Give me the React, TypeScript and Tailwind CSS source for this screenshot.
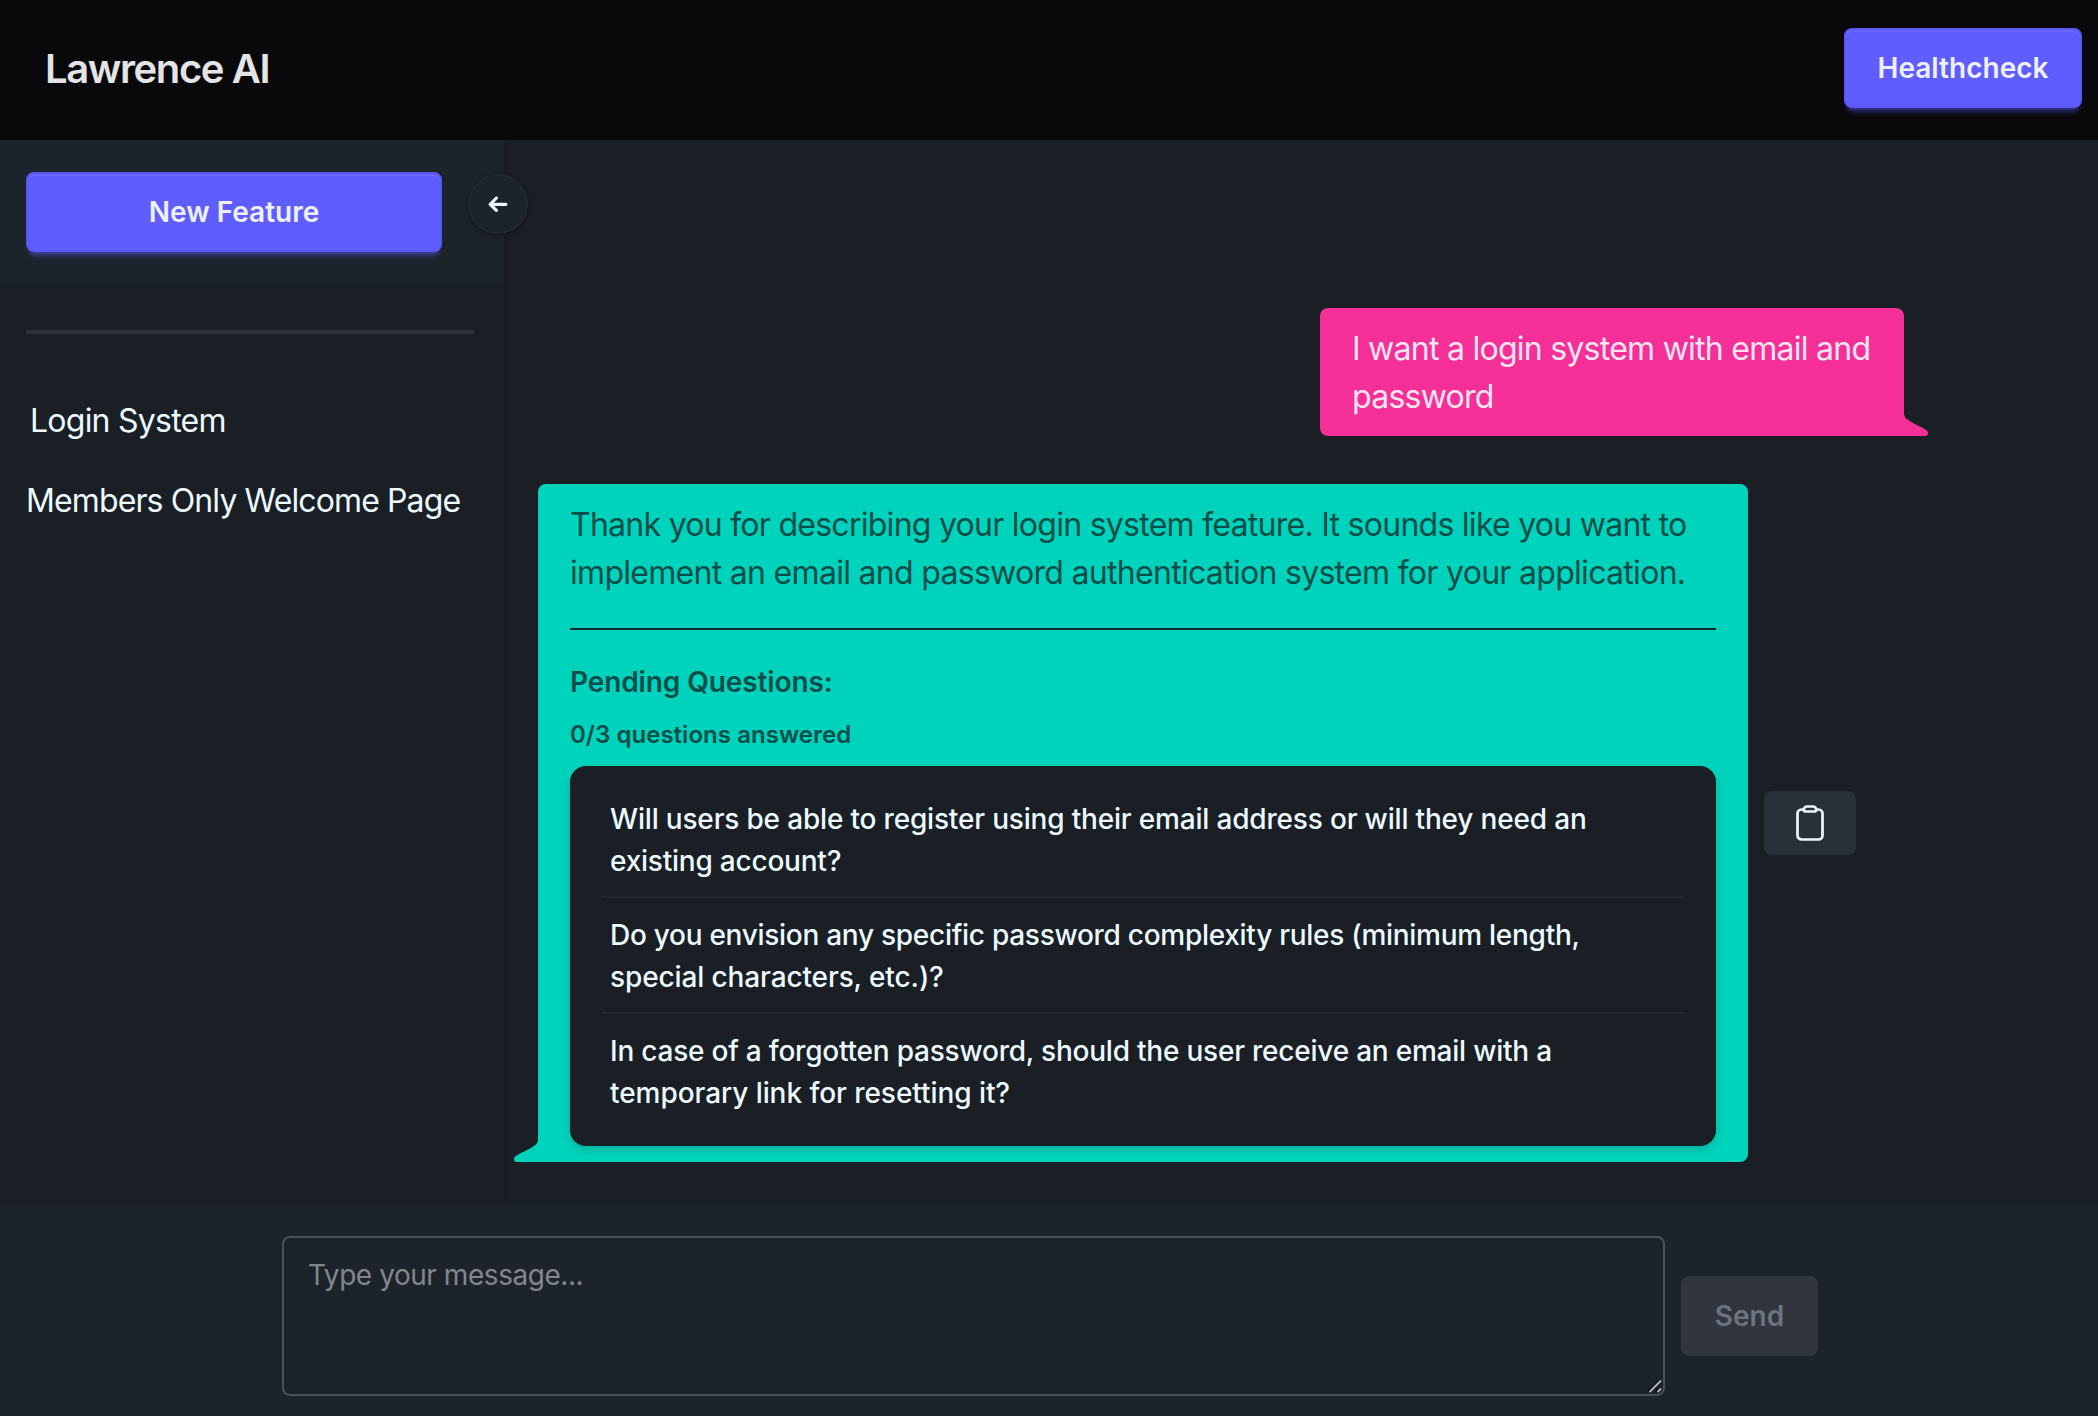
import React from "react";

const primaryButton =
  "flex h-20 items-center justify-center rounded-lg border-2 border-[#5b58f2] bg-[#605dff] text-[28px] font-semibold text-[#edf1fe] shadow-[inset_0_2px_0_rgba(255,255,255,0.06),0_6px_4px_-4px_rgba(96,93,255,0.4),0_8px_6px_-4px_rgba(96,93,255,0.3)]";

const questions = [
  {
    lines: [
      "Will users be able to register using their email address or will they need an",
      "existing account?",
    ],
    tracking: ["tracking-[-0.18px]", "tracking-[-0.22px]"],
  },
  {
    lines: [
      "Do you envision any specific password complexity rules (minimum length,",
      "special characters, etc.)?",
    ],
    tracking: ["tracking-[-0.28px]", "tracking-[-0.12px]"],
  },
  {
    lines: [
      "In case of a forgotten password, should the user receive an email with a",
      "temporary link for resetting it?",
    ],
    tracking: ["tracking-[-0.22px]", "tracking-[-0.06px]"],
  },
];

function BubbleTail({ className }: { className: string }) {
  return (
    <svg viewBox="0 0 24 24" className={`absolute bottom-0 size-6 ${className}`} fill="currentColor">
      <path d="M24 2.5C23.4 4.6 22.6 6 20.5 7.6C15.5 11.2 8 14.4 2.6 17.6C0.8 18.7 0 19.8 0 21.2C0 23 1 24 2.8 24H24Z" />
    </svg>
  );
}

function Header() {
  return (
    <header className="flex h-[140px] shrink-0 items-center justify-between bg-[#09090b] pr-4 pb-1 pl-[45px]">
      <h1 className="pt-0.5 text-[40px] leading-none font-semibold tracking-[-1.4px] text-[#e4e4e7]">Lawrence AI</h1>
      <button className={`${primaryButton} w-[238px]`}>Healthcheck</button>
    </header>
  );
}

function Sidebar() {
  return (
    <aside className="relative w-[504px] shrink-0 shadow-[2px_0_5px_rgba(0,0,0,0.12)]">
      <div className="h-36 bg-[#1d232a] pt-8 pl-[26px]">
        <button className={`${primaryButton} w-[416px]`}>New Feature</button>
      </div>
      <div className="mt-[46px] ml-[26px] h-1 w-[448px] bg-[#2e3138]" />
      <nav className="mt-[47px] text-[32px] text-[#ecf9ff]">
        <a className="flex h-20 items-center pl-[30px] tracking-[-0.76px]">Login System</a>
        <a className="flex h-20 items-center pl-[26px] tracking-[-0.88px] whitespace-nowrap">Members Only Welcome Page</a>
      </nav>
      <button className="absolute top-[34px] left-[468px] flex size-[60px] items-center justify-center rounded-full border-2 border-[#22282f] bg-[#1d232a] shadow-[0_2px_5px_rgba(0,0,0,0.3)]">
        <svg viewBox="0 0 20 16" className="h-4 w-5" fill="none" stroke="#ecf4ff" strokeWidth="3.2" strokeLinecap="round" strokeLinejoin="round">
          <path d="M17.9 8.3H2.6M8.4 2L2.2 8.3L8.4 14.4" />
        </svg>
      </button>
    </aside>
  );
}

function Chat() {
  return (
    <main className="flex flex-1 flex-col pt-[168px] pl-[34px]">
      <div className="relative ml-[782px] h-32 w-[584px] rounded-lg rounded-br-none bg-[#f43098] px-8 pt-[17px] text-[32px] leading-[48px] tracking-[-0.74px] text-[#f9e4f0]">
        I want a login system with email and
        <br />
        password
        <BubbleTail className="-right-6 -scale-x-100 text-[#f43098]" />
      </div>

      <div className="mt-12 flex">
        <div className="relative h-[678px] w-[1210px] rounded-lg rounded-bl-none bg-[#00d3bb] px-8 pt-[17px] text-[#084d49]">
          <p className="text-[32px] leading-[48px] whitespace-nowrap">
            <span className="tracking-[-0.73px]">
              Thank you for describing your login system feature. It sounds like you want to
            </span>
            <br />
            <span className="tracking-[-0.7px]">
              implement an email and password authentication system for your application.
            </span>
          </p>
          <div className="mt-[31px] h-0.5 bg-[#15282e]" />
          <h2 className="mt-8 text-[28px] leading-10 font-semibold tracking-[-0.1px]">Pending Questions:</h2>
          <p className="mt-[17px] text-2xl leading-8 font-semibold tracking-[0.04px]">0/3 questions answered</p>
          <ul className="mt-[15px] rounded-2xl bg-[#1a1e25] px-8 py-4 text-[28px] leading-[42px] font-medium whitespace-nowrap text-[#ecf9ff] shadow-[0_4px_8px_rgba(0,0,0,0.16)]">
            {questions.map((q) => (
              <li key={q.lines[0]} className="h-[116px] border-b-2 border-[#24292f] px-2 pt-4 last:border-transparent">
                <span className={q.tracking[0]}>{q.lines[0]}</span>
                <br />
                <span className={q.tracking[1]}>{q.lines[1]}</span>
              </li>
            ))}
          </ul>
          <BubbleTail className="-left-6 text-[#00d3bb]" />
        </div>
        <button className="mt-[307px] ml-4 flex h-16 w-[92px] items-center justify-center rounded-lg bg-[#2a303a]">
          <svg viewBox="0 0 28 36" className="h-9 w-7" fill="none" stroke="#ecf4ff" strokeWidth="2.7" strokeLinecap="round" strokeLinejoin="round">
            <path d="M7.8 4.5H5.6A4.1 4.1 0 0 0 1.5 8.6V30.4A4.1 4.1 0 0 0 5.6 34.5H22.4A4.1 4.1 0 0 0 26.5 30.4V8.6A4.1 4.1 0 0 0 22.4 4.5H20.2" />
            <path d="M9.8 6.5H18.2C19.4 6.5 20.2 5.7 20.2 4.7C20.2 3 18.8 1.5 17 1.5H11C9.2 1.5 7.8 3 7.8 4.7C7.8 5.7 8.6 6.5 9.8 6.5Z" />
          </svg>
        </button>
      </div>
    </main>
  );
}

function Composer() {
  return (
    <footer className="flex h-[212px] shrink-0 items-center justify-center gap-4 bg-[#1d232a] pt-8 pb-5 pl-0.5">
      <div className="relative h-40 w-[1383px]">
        <textarea
          placeholder="Type your message..."
          className="block h-40 w-full resize-none rounded-lg border-2 border-[#4c5158] bg-transparent px-6 py-4 text-[28px] leading-[42px] tracking-[-0.45px] text-[#ecf9ff] outline-none placeholder:text-[#80878e]"
        />
        <svg viewBox="0 0 16 16" className="absolute right-0.5 bottom-0.5 size-4" fill="none" strokeWidth="1.8">
          <path d="M1 13.5L12.5 2M8.5 13.5L12.5 9.5" stroke="#0c0f13" />
          <path d="M2.5 14L14 2.5M10.5 14L14 10.5" stroke="#b4b8bc" />
        </svg>
      </div>
      <button className="h-20 w-[137px] rounded-lg bg-[#31353f] text-[28px] font-semibold text-[#6c747e]">Send</button>
    </footer>
  );
}

export default function App() {
  return (
    <div className="flex h-[1416px] w-full flex-col overflow-hidden bg-[#1a1e25] font-['Inter',sans-serif]">
      <Header />
      <div className="flex h-[1064px] shrink-0">
        <Sidebar />
        <Chat />
      </div>
      <Composer />
    </div>
  );
}
